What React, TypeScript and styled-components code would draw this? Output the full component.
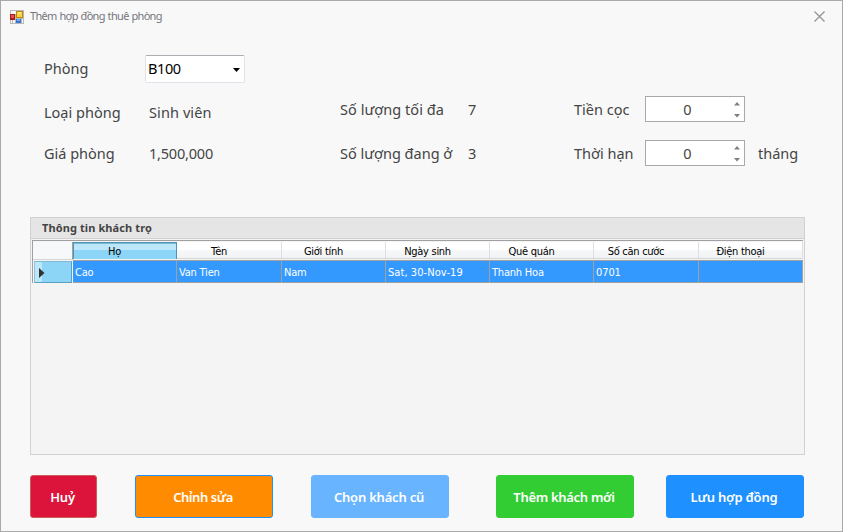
import React from "react";
import styled, { createGlobalStyle } from "styled-components";

const GlobalStyle = createGlobalStyle`
  *, *::before, *::after { box-sizing: border-box; }
  body { margin: 0; background: #f8f8f8; }
`;

const Window = styled.div`
  width: 843px;
  height: 532px;
  display: flex;
  flex-direction: column;
  background: #f8f8f8;
  border: 1px solid #a9a9a9;
  font-family: "Noto Sans", "Open Sans", sans-serif;
  overflow: hidden;
  white-space: nowrap;
`;

const TitleBar = styled.header`
  height: 31px;
  flex: none;
  display: flex;
  align-items: center;
  padding: 0 17px 0 9px;
`;

const Title = styled.span`
  flex: 1;
  margin-left: 6px;
  padding-bottom: 1px;
  font-size: 11px;
  letter-spacing: -0.68px;
  word-spacing: 0.6px;
  line-height: 16px;
  color: #76767c;
`;

const CloseButton = styled.button`
  width: 11px;
  height: 11px;
  padding: 0;
  border: 0;
  background: none;
  display: flex;
`;

const Form = styled.section`
  flex: none;
  display: grid;
  grid-template-columns: 105px 191px 128px 106px 71px 113px auto;
  grid-template-rows: 28px 26px 26px;
  row-gap: 13px;
  padding: 23px 0 0 43px;
  height: 185px;
  align-content: start;
  align-items: center;
  font-size: 14.5px;
  line-height: 20px;
  color: #444;
`;

const Field = styled.span<{ $drop?: number; $ls?: number }>`
  padding-top: ${(p) => p.$drop ?? 0}px;
  padding-bottom: 1px;
  letter-spacing: ${(p) => p.$ls ?? 0}px;
`;

const RoomLabel = styled(Field)`
  padding-bottom: 2px;
`;

const LastRow = styled.div`
  display: contents;
  & > * { margin-top: 10px; margin-bottom: 0; }
`;

const Combo = styled.div`
  grid-column: 2 / -1;
  width: 100px;
  height: 28px;
  margin-left: -4px;
  padding: 0 4px 2px 2px;
  display: flex;
  align-items: center;
  justify-content: space-between;
  background: #fff;
  border: 1px solid #e2e3ea;
  border-top-color: #abadb3;
  border-radius: 2px;
  color: #000;
  letter-spacing: -0.4px;

  svg { margin-top: 3px; }
`;

const Spinner = styled.div`
  width: 100px;
  height: 26px;
  display: flex;
  background: #fff;
  border: 1px solid #a9a9a9;
`;

const SpinValue = styled.span`
  width: 83px;
  text-align: center;
  line-height: 25px;
`;

const SpinArrows = styled.svg`
  width: 15px;
  height: 24px;
`;

const Group = styled.section`
  flex: none;
  width: 775px;
  height: 238px;
  margin-left: 29px;
  background: #f4f4f4;
  border: 1px solid #d1d1d1;
`;

const GroupTitle = styled.h2`
  margin: 0;
  height: 21px;
  padding-left: 11px;
  background: #e5e5e5;
  border-bottom: 1px solid #d1d1d1;
  color: #444;
  font-size: 11px;
  font-weight: 700;
  line-height: 20px;
  letter-spacing: 0.1px;
`;

const Grid = styled.div`
  margin: 1px 1px 0;
  display: grid;
  grid-template-columns: 40px 104px 105px 104px 104px 104px 105px auto;
  grid-template-rows: 19px 23px;
  border-top: 1px solid #a0a0a0;
  border-left: 1px solid #a0a0a0;
  font-family: "DejaVu Sans Condensed", "DejaVu Sans", sans-serif;
  font-stretch: condensed;
  font-size: 11px;
`;

const HeadCell = styled.div<{ $selected?: boolean; $corner?: boolean }>`
  margin: 1px 0 ${(p) => (p.$corner ? 0 : 1)}px;
  padding: 2px 20px 0 0;
  display: flex;
  align-items: center;
  justify-content: center;
  color: #000;
  letter-spacing: -0.28px;
  border-right: 1px solid ${(p) => (p.$corner ? "#a0a0a0" : p.$selected ? "#5094b4" : "#dedfe1")};
  border-bottom: ${(p) => (p.$selected ? "0" : "1px solid #d5d5d5")};
  background: ${(p) =>
    p.$selected
      ? "linear-gradient(#bce6fa 0 8px, #8cd5f7 8px)"
      : p.$corner
        ? "#f7f8fa"
        : "linear-gradient(#fff 0 8px, #f7f8fa 8px, #f1f2f4)"};
  box-shadow: ${(p) => (p.$selected ? "inset 1px 1px #5094b4, inset 0 2px #80b9d3" : "none")};
`;

const RowHeader = styled.div`
  margin: 1px 1px 0 1px;
  height: 22px;
  padding: 1px 0 0 4px;
  display: flex;
  align-items: center;
  border: 1px solid #5ba2c1;
  border-left-color: #8fc6de;
  border-top-color: #7fb9d2;
  background: linear-gradient(90deg, #bce6fa 0 7px, #8cd5f7 7px);
`;

const DataCell = styled.div<{ $ls?: number }>`
  padding: 1px 0 0 2px;
  line-height: 21px;
  color: #fff;
  background: #3399ff;
  border: solid #a0a0a0;
  border-width: 1px 1px 1px 0;
  letter-spacing: ${(p) => p.$ls ?? -0.2}px;
`;

const Actions = styled.footer`
  display: flex;
  margin: 20px 0 0 29px;
`;

const Button = styled.button<{ $bg: string; $edge?: string; $w?: number; $gap?: number; $ls?: number }>`
  width: ${(p) => p.$w ?? 138}px;
  height: 43px;
  margin: 0 0 0 ${(p) => p.$gap ?? 0}px;
  padding: 1px 2px 0 0;
  border: 1px solid ${(p) => p.$edge ?? p.$bg};
  border-radius: 3px;
  background: ${(p) => p.$bg};
  color: #fff;
  font: 600 13px/20px "Noto Sans", sans-serif;
  letter-spacing: ${(p) => p.$ls ?? -0.2}px;
`;

const AppIcon = () => (
  <svg width="14" height="14" viewBox="0 0 14 14" shapeRendering="crispEdges">
    <rect width="14" height="14" fill="#b8b8b8" />
    <path d="M1 1h5v3H1zM1 10h1v3H1zM3 10h2v3H3zM12 9h1v4h-1z" fill="#f8f8f8" />
    <rect y="4" width="5" height="6" fill="#ad1d15" />
    <rect x="1" y="5" width="3" height="3" fill="#dc5547" />
    <rect x="6" y="1" width="7" height="7" fill="#b98713" />
    <rect x="7" y="2" width="5" height="5" fill="#ffd23c" />
    <rect x="8" y="2" width="3" height="2" fill="#ffe77b" />
    <rect x="6" y="9" width="5" height="4" fill="#3476d2" />
    <rect x="7" y="9" width="3" height="2" fill="#70a7ef" />
  </svg>
);

const SpinBox = () => (
  <Spinner>
    <SpinValue>0</SpinValue>
    <SpinArrows viewBox="0 0 15 24" fill="#808080">
      <path d="M5 8.500h6L8 5zM5 17h6L8 20.500z" />
    </SpinArrows>
  </Spinner>
);

const headings = ["Họ", "Tên", "Giới tính", "Ngày sinh", "Quê quán", "Số căn cước", "Điện thoại"];
const guest = [
  { value: "Cao" },
  { value: "Van Tien" },
  { value: "Nam" },
  { value: "Sat, 30-Nov-19", tracking: 0.07 },
  { value: "Thanh Hoa" },
  { value: "0701", tracking: -0.1 },
  { value: "" },
];

export default function App() {
  return (
    <>
      <GlobalStyle />
      <Window>
        <TitleBar>
          <AppIcon />
          <Title>Thêm hợp đồng thuê phòng</Title>
          <CloseButton aria-label="Đóng">
            <svg width="11" height="11" viewBox="0 0 11 11" stroke="#929292" strokeWidth="1.3">
              <path d="M.5.500l10 10M10.500.500l-10 10" />
            </svg>
          </CloseButton>
        </TitleBar>

        <Form>
          <RoomLabel>Phòng</RoomLabel>
          <Combo>
            <span>B100</span>
            <svg width="7" height="4" viewBox="0 0 7 4"><path d="M0 0h7L3.500 4z" /></svg>
          </Combo>

          <Field $drop={6}>Loại phòng</Field>
          <Field $drop={6} $ls={0.1}>Sinh viên</Field>
          <Field $ls={0.05}>Số lượng tối đa</Field>
          <Field>7</Field>
          <Field>Tiền cọc</Field>
          <SpinBox />
          <span />

          <LastRow>
            <Field>Giá phòng</Field>
            <Field $ls={-0.2}>1,500,000</Field>
            <Field>Số lượng đang ở</Field>
            <Field>3</Field>
            <Field>Thời hạn</Field>
            <SpinBox />
            <Field>tháng</Field>
          </LastRow>
        </Form>

        <Group>
          <GroupTitle>Thông tin khách trọ</GroupTitle>
          <Grid>
            <HeadCell $corner />
            {headings.map((h, i) => (
              <HeadCell key={h} $selected={i === 0}>{h}</HeadCell>
            ))}
            <RowHeader>
              <svg width="6" height="10" viewBox="0 0 6 10"><path d="M0 0v10l5.500-5z" fill="#333" /></svg>
            </RowHeader>
            {guest.map((cell, i) => (
              <DataCell key={i} $ls={cell.tracking}>{cell.value}</DataCell>
            ))}
          </Grid>
        </Group>

        <Actions>
          <Button $bg="#dc143c" $edge="#cd5c5c" $w={67}>Huỷ</Button>
          <Button $bg="#ff8c00" $edge="#1e90ff" $gap={38} $ls={-0.45}>Chỉnh sửa</Button>
          <Button $bg="#69b4ff" $gap={38}>Chọn khách cũ</Button>
          <Button $bg="#32cd32" $gap={47} $ls={-0.3}>Thêm khách mới</Button>
          <Button $bg="#1e90ff" $gap={32}>Lưu hợp đồng</Button>
        </Actions>
      </Window>
    </>
  );
}
